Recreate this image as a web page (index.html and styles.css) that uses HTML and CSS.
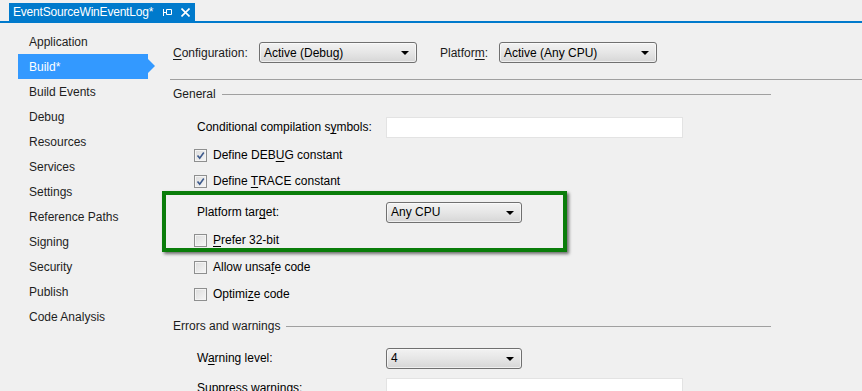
FILE: index.html
```html
<!DOCTYPE html>
<html lang="en">
<head>
  <meta charset="UTF-8" />
  <title>EventSourceWinEventLog - Build</title>
  <link rel="stylesheet" href="styles.css">
</head>
<body>

  <div class="tabstrip">
    <div class="tab">
      <span class="tab-title">EventSourceWinEventLog*</span>
      <svg class="pin" width="9" height="7" viewBox="0 0 9 7">
        <path d="M0.5 0v7M0.5 3.5h3M3.5 0.5h5v5h-5z" fill="none" stroke="#fff" stroke-width="1"/>
      </svg>
      <svg class="close" width="9" height="9" viewBox="0 0 9 9">
        <path d="M0.5 0.5l8 8M8.5 0.5l-8 8" stroke="#fff" stroke-width="1.6"/>
      </svg>
    </div>
  </div>

  <div class="layout">
    <nav class="sidenav">
      <a>Application</a>
      <a class="active">Build*</a>
      <a>Build Events</a>
      <a>Debug</a>
      <a>Resources</a>
      <a>Services</a>
      <a>Settings</a>
      <a>Reference Paths</a>
      <a>Signing</a>
      <a>Security</a>
      <a>Publish</a>
      <a>Code Analysis</a>
    </nav>

    <main class="panel">
      <div class="toolbar">
        <label class="config-label"><u>C</u>onfiguration:</label>
        <div class="select wide"><span>Active (Debug)</span><i class="caret"></i></div>
        <label class="platform-label">Platfor<u>m</u>:</label>
        <div class="select wide"><span>Active (Any CPU)</span><i class="caret"></i></div>
      </div>

      <section class="group">
        <div class="group-title"><span>General</span></div>

        <div class="row field mt-12">
          <label>Conditional compilation s<u>y</u>mbols:</label>
          <div class="textbox"></div>
        </div>
        <div class="row check mt-2">
          <span class="checkbox checked"><svg width="11" height="11" viewBox="0 0 11 11"><path d="M2.5 5.5l2.2 2.6L8.8 2.5" fill="none" stroke="#3d5a8c" stroke-width="1.6"/></svg></span>
          <span>Define DEB<u>U</u>G constant</span>
        </div>
        <div class="row check mt-0">
          <span class="checkbox checked"><svg width="11" height="11" viewBox="0 0 11 11"><path d="M2.5 5.5l2.2 2.6L8.8 2.5" fill="none" stroke="#3d5a8c" stroke-width="1.6"/></svg></span>
          <span>Define <u>T</u>RACE constant</span>
        </div>

        <div class="highlight">
          <div class="row field mt-5">
            <label>Platform tar<u>g</u>et:</label>
            <div class="select narrow"><span>Any CPU</span><i class="caret"></i></div>
          </div>
          <div class="row check mt-2">
            <span class="checkbox"></span>
            <span><u>P</u>refer 32-bit</span>
          </div>
        </div>

        <div class="row check mt-1">
          <span class="checkbox"></span>
          <span>Allow unsa<u>f</u>e code</span>
        </div>
        <div class="row check mt-1">
          <span class="checkbox"></span>
          <span>Optimi<u>z</u>e code</span>
        </div>
      </section>

      <section class="group errors">
        <div class="group-title"><span>Errors and warnings</span></div>

        <div class="row field mt-11">
          <label>W<u>a</u>rning level:</label>
          <div class="select narrow"><span>4</span><i class="caret"></i></div>
        </div>
        <div class="row field mt-4">
          <label>Suppress warnings:</label>
          <div class="textbox"></div>
        </div>
      </section>
    </main>
  </div>

</body>
</html>
```

FILE: styles.css
```css
body {
  margin: 0;
  background: #f0f0f0;
  font-family: "Liberation Sans", Arial, sans-serif;
  font-size: 12px;
  color: #1b1b1b;
  overflow: hidden;
}

u {
  text-decoration: underline;
  text-underline-offset: 2px;
}

/* document tab */
.tabstrip {
  padding: 3px 0 0 9px;
  border-bottom: 2px solid #007acc;
}

.tab {
  display: inline-flex;
  align-items: center;
  height: 18px;
  width: 186px;
  box-sizing: border-box;
  padding-left: 4px;
  background: #007acc;
  color: #fff;
}

.tab-title {
  width: 146px;
  letter-spacing: -0.2px;
}

.pin {
  margin-left: 4px;
}

.close {
  margin-left: 9px;
}

/* page layout */
.layout {
  display: flex;
}

.sidenav {
  width: 170px;
  flex-shrink: 0;
  padding-top: 6px;
}

.sidenav a {
  position: relative;
  display: flex;
  align-items: center;
  height: 25px;
  margin-left: 18px;
  width: 130px;
  padding-left: 11px;
  box-sizing: border-box;
  color: #1e1e1e;
}

.sidenav a.active {
  background: #3399ff;
  color: #fff;
}

.sidenav a.active::after {
  content: "";
  position: absolute;
  right: -7px;
  top: 5px;
  border-left: 7px solid #3399ff;
  border-top: 7px solid transparent;
  border-bottom: 7px solid transparent;
}

.panel {
  flex: 1;
}

/* configuration bar */
.toolbar {
  display: flex;
  align-items: center;
  padding: 19px 0 16px 3px;
  border-bottom: 1px solid #a0a0a0;
}

.config-label {
  width: 86px;
}

.platform-label {
  width: 59px;
  margin-left: 23px;
}

.select {
  position: relative;
  display: flex;
  align-items: center;
  height: 21px;
  box-sizing: border-box;
  padding-left: 4px;
  border: 1px solid #707070;
  border-radius: 3px;
  background: linear-gradient(#f2f2f2, #e6e6e6 50%, #d6d6d6);
  box-shadow: inset 0 0 0 1px rgba(255, 255, 255, 0.6);
  color: #000;
}

.select.wide {
  width: 158px;
}

.select.narrow {
  width: 136px;
}

.caret {
  position: absolute;
  right: 7px;
  top: 8px;
  border-top: 4px solid #000;
  border-left: 4px solid transparent;
  border-right: 4px solid transparent;
}

/* groups */
.group {
  width: 598px;
  margin-left: 3px;
}

.group-title {
  display: flex;
  align-items: center;
  height: 16px;
  margin-top: 6px;
}

.errors .group-title {
  margin-top: 11px;
}

.group-title::after {
  content: "";
  flex: 1;
  margin-left: 6px;
  border-top: 1px solid #a0a0a0;
}

.row {
  display: flex;
  align-items: center;
  height: 26px;
  color: #000;
}

.row.field {
  padding-left: 24px;
}

.row.field label {
  width: 189px;
}

.row.check {
  padding-left: 21px;
}

.mt-0 { margin-top: 0; }
.mt-1 { margin-top: 1px; }
.mt-2 { margin-top: 2px; }
.mt-4 { margin-top: 4px; }
.mt-5 { margin-top: 5px; }
.mt-11 { margin-top: 11px; }
.mt-12 { margin-top: 12px; }

.textbox {
  width: 297px;
  height: 21px;
  box-sizing: border-box;
  background: #fff;
  border: 1px solid #e3e3e3;
}

.checkbox {
  display: inline-flex;
  align-items: center;
  justify-content: center;
  width: 13px;
  height: 13px;
  box-sizing: border-box;
  margin-right: 6px;
  border: 1px solid #8e8f8f;
  background: linear-gradient(135deg, #dcdcdc, #f6f6f6);
  box-shadow: inset 0 0 0 1px #f4f4f4;
}

/* green annotation frame */
.highlight {
  position: relative;
}

.highlight::after {
  content: "";
  position: absolute;
  left: -11px;
  top: -8px;
  width: 405px;
  height: 61px;
  box-sizing: border-box;
  border: 4px solid #0a7d0a;
  box-shadow: 2px 2px 3px rgba(0, 0, 0, 0.55);
  pointer-events: none;
}
```
